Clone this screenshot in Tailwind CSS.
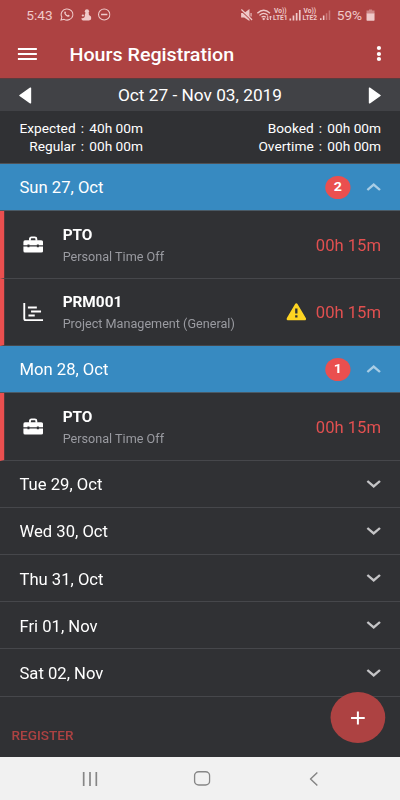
<!DOCTYPE html>
<html lang="en">
<head>
  <meta charset="UTF-8" />
  <meta name="viewport" content="width=device-width, initial-scale=1.0" />
  <title>Hours Registration</title>
  <script src="https://cdn.jsdelivr.net/npm/@tailwindcss/browser@4"></script>
</head>
<body class="w-[400px] h-[800px] overflow-hidden bg-[#303134]">
  <!-- Shared icons -->
  <svg class="hidden">
    <symbol id="toolbox" viewBox="0 0 20 17">
      <path d="M6.800 4.500V2.600q0-1.500 1.500-1.500h3.400q1.500 0 1.500 1.500v1.900" fill="none" stroke="currentColor" stroke-width="1.900" />
      <path d="M2 4h16q2 0 2 2v3.300h-4.300v-.8h-2v.8H6.300v-.8h-2v.8H0V6q0-2 2-2z" fill="currentColor" />
      <path d="M0 10.500h4.300v1h2v-1h7.400v1h2v-1H20V15q0 2-2 2H2q-2 0-2-2z" fill="currentColor" />
    </symbol>
    <symbol id="chevron-down" viewBox="0 0 14 8">
      <path d="M1 1l6 5.400L13 1" fill="none" stroke="currentColor" stroke-width="2.300" />
    </symbol>
    <symbol id="chevron-up" viewBox="0 0 14 8">
      <path d="M1 7l6-5.400L13 7" fill="none" stroke="currentColor" stroke-width="2.300" />
    </symbol>
  </svg>

  <!-- Screen is slightly wider than its layout grid -->
  <div class="relative w-[380px] h-[800px] origin-top-left scale-x-[1.05263] flex flex-col font-['Roboto',sans-serif] text-white">

    <header class="h-[79px] shrink-0 bg-[#ad4242] border-b border-[#5b3b3d]">
      <!-- Status bar -->
      <div class="h-[29px] pl-[25px] pr-[24px] flex items-center text-[13px] leading-none text-[#efc9c9]">
        <span class="w-[32px] pt-px">5:43</span>
        <svg class="w-[13px] h-[13px]" viewBox="0 0 14 14" fill="none" stroke="currentColor">
          <path d="M1 13l.9-3.200A6 6 0 1 1 4.200 12.200z" stroke-width="1.100" />
          <path d="M4.500 4.200c.8-1 1.400-.2 1.700 1-.7.8-.4 1 .4 1.800.9.900 1.200 1 1.900.4 1.200.3 1.900 1 1 1.700C7.500 10.500 3.500 6.500 4.500 4.200z" fill="currentColor" stroke="none" />
        </svg>
        <svg class="w-[10px] h-[12px] ml-[7px]" viewBox="0 0 10 12" fill="currentColor">
          <circle cx="5.600" cy="2.200" r="2" />
          <path d="M4.300 3.500h3L7.500 6q2.300 1 2.300 3T7.500 11.500H3Q.3 11.500.3 9.200 2 9.500 3 8.500 3.800 7.500 3.500 6z" />
          <circle cx="1.700" cy="6.500" r="1.100" />
        </svg>
        <svg class="w-[12px] h-[13px] ml-[6px]" viewBox="0 0 12 13" fill="none" stroke="currentColor">
          <ellipse cx="6" cy="6.500" rx="5.400" ry="5.600" />
          <path d="M3 6.500h6" stroke-width="1.300" />
        </svg>
        <div class="ml-auto flex items-center">
          <svg class="w-[11px] h-[12px] mr-[4px]" viewBox="0 0 11 12">
            <path d="M0 4h3l5-4v12L3 8.500H0z" fill="currentColor" />
            <path d="M9.500 4v3.500" stroke="currentColor" fill="none" />
            <path d="M0 1.500l10.500 10.500" stroke="#ad4242" stroke-width="1.200" />
            <path d="M.3.500l10.300 10.500" stroke="currentColor" stroke-width="1.200" />
          </svg>
          <svg class="w-[15px] h-[12px]" viewBox="0 0 15 12" fill="none" stroke="currentColor" stroke-width="1.300">
            <path d="M.5 4.200q6-6 12 0M2.500 6.400q4-4 8 0M4.500 8.300q2-1.800 4 0" />
            <path d="M10.300 7v4M9 9.500l1.300 1.500 1.300-1.500M13 11V7M11.700 8.500L13 7l1.300 1.500" stroke-width=".9" />
            <circle cx="6.500" cy="10" r=".5" />
          </svg>
          <div class="w-[15px] text-center text-[6.300px] leading-[6.500px] font-bold"><div>Vo))</div><div>LTE1</div></div>
          <svg class="w-[12px] h-[12px] mr-px" viewBox="0 0 12 12" fill="currentColor">
            <path d="M1 9.500h1.600v2H1zM4 6.500h1.600v5H4zM7 4h1.600v7.500H7zM10 1h1.600v10.500H10z" />
          </svg>
          <div class="w-[15px] mr-[2px] text-center text-[6.300px] leading-[6.500px] font-bold"><div>Vo))</div><div>LTE2</div></div>
          <svg class="w-[11px] h-[12px] mr-[5px]" viewBox="0 0 12 12" fill="currentColor">
            <path d="M0 9.500h1.600v2H0zM3 6.500h1.600v5H3z" />
            <path d="M6 4h1.600v7.500H6zM9 1h1.600v10.500H9z" opacity=".4" />
          </svg>
          <span class="mr-[4px] pt-px">59%</span>
          <svg class="w-[8px] h-[12px]" viewBox="0 0 8 12" fill="currentColor">
            <path d="M2.500 .5h3v1H8V5H0V1.500h2.500z" opacity=".5" />
            <path d="M0 4.500h8v6.500q0 .8-.8.8H.8q-.8 0-.8-.8z" />
          </svg>
        </div>
      </div>
      <!-- Title bar -->
      <div class="h-[49px] pl-[17px] pr-[18px] flex items-center">
        <div class="w-[18px] flex flex-col gap-[3px]">
          <div class="h-[2px] bg-white"></div>
          <div class="h-[2px] bg-white"></div>
          <div class="h-[2px] bg-white"></div>
        </div>
        <h1 class="ml-[31px] pt-[3px] text-[18.700px] font-medium leading-none">Hours Registration</h1>
        <div class="ml-auto flex flex-col gap-[1.500px]">
          <div class="size-[4px] rounded-full bg-white"></div>
          <div class="size-[4px] rounded-full bg-white"></div>
          <div class="size-[4px] rounded-full bg-white"></div>
        </div>
      </div>
    </header>

    <!-- Week picker -->
    <div class="h-[32px] shrink-0 px-[18px] flex items-center justify-between bg-[#414246] text-[16.400px] leading-none">
      <svg class="w-[12px] h-[17px]" viewBox="0 0 12 17"><path d="M11 1.200v14.600L1 8.500z" fill="#fff" stroke="#fff" stroke-width="1.500" stroke-linejoin="round" /></svg>
      <span class="pt-[2px]">Oct 27 - Nov 03, 2019</span>
      <svg class="w-[12px] h-[17px]" viewBox="0 0 12 17"><path d="M1 1.200v14.600l10-7.300z" fill="#fff" stroke="#fff" stroke-width="1.500" stroke-linejoin="round" /></svg>
    </div>

    <!-- Totals -->
    <div class="h-[53px] shrink-0 pl-[18.500px] pr-[18px] pt-[9px] flex justify-between text-[13px] leading-[18px] bg-[#303134] border-b border-[#505256]">
      <div class="grid grid-cols-[auto_13px_auto] h-[36px] text-right">
        <span>Expected</span><span class="text-center">:</span><span>40h 00m</span>
        <span>Regular</span><span class="text-center">:</span><span>00h 00m</span>
      </div>
      <div class="grid grid-cols-[auto_13px_auto] h-[36px] text-right">
        <span>Booked</span><span class="text-center">:</span><span>00h 00m</span>
        <span>Overtime</span><span class="text-center">:</span><span>00h 00m</span>
      </div>
    </div>

    <!-- Days -->
    <main class="flex flex-col text-[15.800px] leading-none">
      <div class="h-[47px] pl-[18.500px] pr-[18px] flex items-center bg-[#378ac1] border-b border-[#4a5a66]">
        <span class="pt-[2px]">Sun 27, Oct</span>
        <span class="ml-auto mr-[15px] w-[24px] h-[23px] rounded-[50%] bg-[#ea4f4f] text-[13.500px] font-bold flex items-center justify-center">2</span>
        <svg class="w-[14px] h-[8px] text-[#a9cde5]"><use href="#chevron-up" /></svg>
      </div>

      <div class="h-[68px] pl-[18px] pr-[18px] flex items-center border-b border-[#46474b] border-l-4 border-l-[#ea4f4f]">
        <svg class="w-[19px] h-[17px]"><use href="#toolbox" /></svg>
        <div class="ml-[18.500px] pt-[3px]">
          <div class="text-[14.600px] leading-[22px] font-bold">PTO</div>
          <div class="text-[12px] leading-[22px] text-[#9a9ba1]">Personal Time Off</div>
        </div>
        <span class="ml-auto pt-[2px] text-[#e25050]">00h 15m</span>
      </div>

      <div class="h-[67px] pl-[18px] pr-[18px] flex items-center border-b border-[#46474b] border-l-4 border-l-[#ea4f4f]">
        <svg class="w-[19px] h-[20px]" viewBox="0 0 19 20" fill="none" stroke="currentColor" stroke-width="1.900">
          <path d="M1 1v15.500q0 1.600 1.600 1.600H19" />
          <path d="M4.500 5.500h8.500M7.500 9.500h9.500M5 13.500h6" />
        </svg>
        <div class="ml-[18.500px] pt-[2px]">
          <div class="text-[14.600px] leading-[22px] font-bold">PRM001</div>
          <div class="text-[12px] leading-[22px] text-[#9a9ba1]">Project Management (General)</div>
        </div>
        <svg class="ml-auto mr-[9px] w-[19px] h-[18px]" viewBox="0 0 19 18">
          <path d="M9.500 1.700L17.500 16h-16z" fill="#fdd422" stroke="#fdd422" stroke-width="2.600" stroke-linejoin="round" />
          <path d="M9.500 5.500v5M9.500 12.200v2.300" stroke="#303134" stroke-width="2.200" />
        </svg>
        <span class="pt-[2px] text-[#e25050]">00h 15m</span>
      </div>

      <div class="h-[47px] pl-[18.500px] pr-[18px] flex items-center bg-[#378ac1] border-b border-[#4a5a66]">
        <span class="pt-[2px]">Mon 28, Oct</span>
        <span class="ml-auto mr-[15px] w-[24px] h-[23px] rounded-[50%] bg-[#ea4f4f] text-[13.500px] font-bold flex items-center justify-center">1</span>
        <svg class="w-[14px] h-[8px] text-[#a9cde5]"><use href="#chevron-up" /></svg>
      </div>

      <div class="h-[68px] pl-[18px] pr-[18px] flex items-center border-b border-[#46474b] border-l-4 border-l-[#ea4f4f]">
        <svg class="w-[19px] h-[17px]"><use href="#toolbox" /></svg>
        <div class="ml-[18.500px] pt-[3px]">
          <div class="text-[14.600px] leading-[22px] font-bold">PTO</div>
          <div class="text-[12px] leading-[22px] text-[#9a9ba1]">Personal Time Off</div>
        </div>
        <span class="ml-auto pt-[2px] text-[#e25050]">00h 15m</span>
      </div>

      <div class="h-[47px] pl-[18.500px] pr-[18px] flex items-center justify-between border-b border-[#46474b]">
        <span class="pt-[2px]">Tue 29, Oct</span>
        <svg class="w-[14px] h-[8px] text-[#c4c4c6]"><use href="#chevron-down" /></svg>
      </div>
      <div class="h-[47px] pl-[18.500px] pr-[18px] flex items-center justify-between border-b border-[#46474b]">
        <span class="pt-[2px]">Wed 30, Oct</span>
        <svg class="w-[14px] h-[8px] text-[#c4c4c6]"><use href="#chevron-down" /></svg>
      </div>
      <div class="h-[47px] pl-[18.500px] pr-[18px] flex items-center justify-between border-b border-[#46474b]">
        <span class="pt-[3px]">Thu 31, Oct</span>
        <svg class="w-[14px] h-[8px] text-[#c4c4c6]"><use href="#chevron-down" /></svg>
      </div>
      <div class="h-[47px] pl-[18.500px] pr-[18px] flex items-center justify-between border-b border-[#46474b]">
        <span class="pt-[3px]">Fri 01, Nov</span>
        <svg class="w-[14px] h-[8px] text-[#c4c4c6]"><use href="#chevron-down" /></svg>
      </div>
      <div class="h-[48px] pl-[18.500px] pr-[18px] flex items-center justify-between border-b border-[#46474b]">
        <span class="pt-[2px]">Sat 02, Nov</span>
        <svg class="w-[14px] h-[8px] text-[#c4c4c6]"><use href="#chevron-down" /></svg>
      </div>
    </main>

    <div class="flex-1 pl-[11px] pt-[32px] text-[12.900px] leading-[14px] font-medium text-[#ad4242]">REGISTER</div>

    <!-- Floating add button -->
    <button class="absolute left-[313.500px] top-[692px] w-[52px] h-[51px] rounded-[50%] bg-[#ad4242] flex items-center justify-center">
      <svg class="w-[14px] h-[14px]" viewBox="0 0 14 14"><path d="M7 .5v13M.5 7h13" stroke="#fff" stroke-width="1.900" /></svg>
    </button>

    <!-- System navigation -->
    <nav class="h-[43px] shrink-0 bg-[#f1f1f1] flex items-center text-[#868686]">
      <svg class="ml-[78px] w-[15px] h-[14px]" viewBox="0 0 15 14" stroke="currentColor" stroke-width="1.600"><path d="M1.500 0v14M7.500 0v14M13.500 0v14" /></svg>
      <svg class="ml-[91px] w-[16px] h-[15px]" viewBox="0 0 16 15" fill="none" stroke="currentColor" stroke-width="1.400"><rect x=".8" y=".8" width="14.400" height="13.200" rx="4" /></svg>
      <svg class="ml-[94px] w-[8px] h-[14px]" viewBox="0 0 8 14" fill="none" stroke="currentColor" stroke-width="1.400"><path d="M7.500 .5L1 7l6.500 6.500" /></svg>
    </nav>
  </div>
</body>
</html>
